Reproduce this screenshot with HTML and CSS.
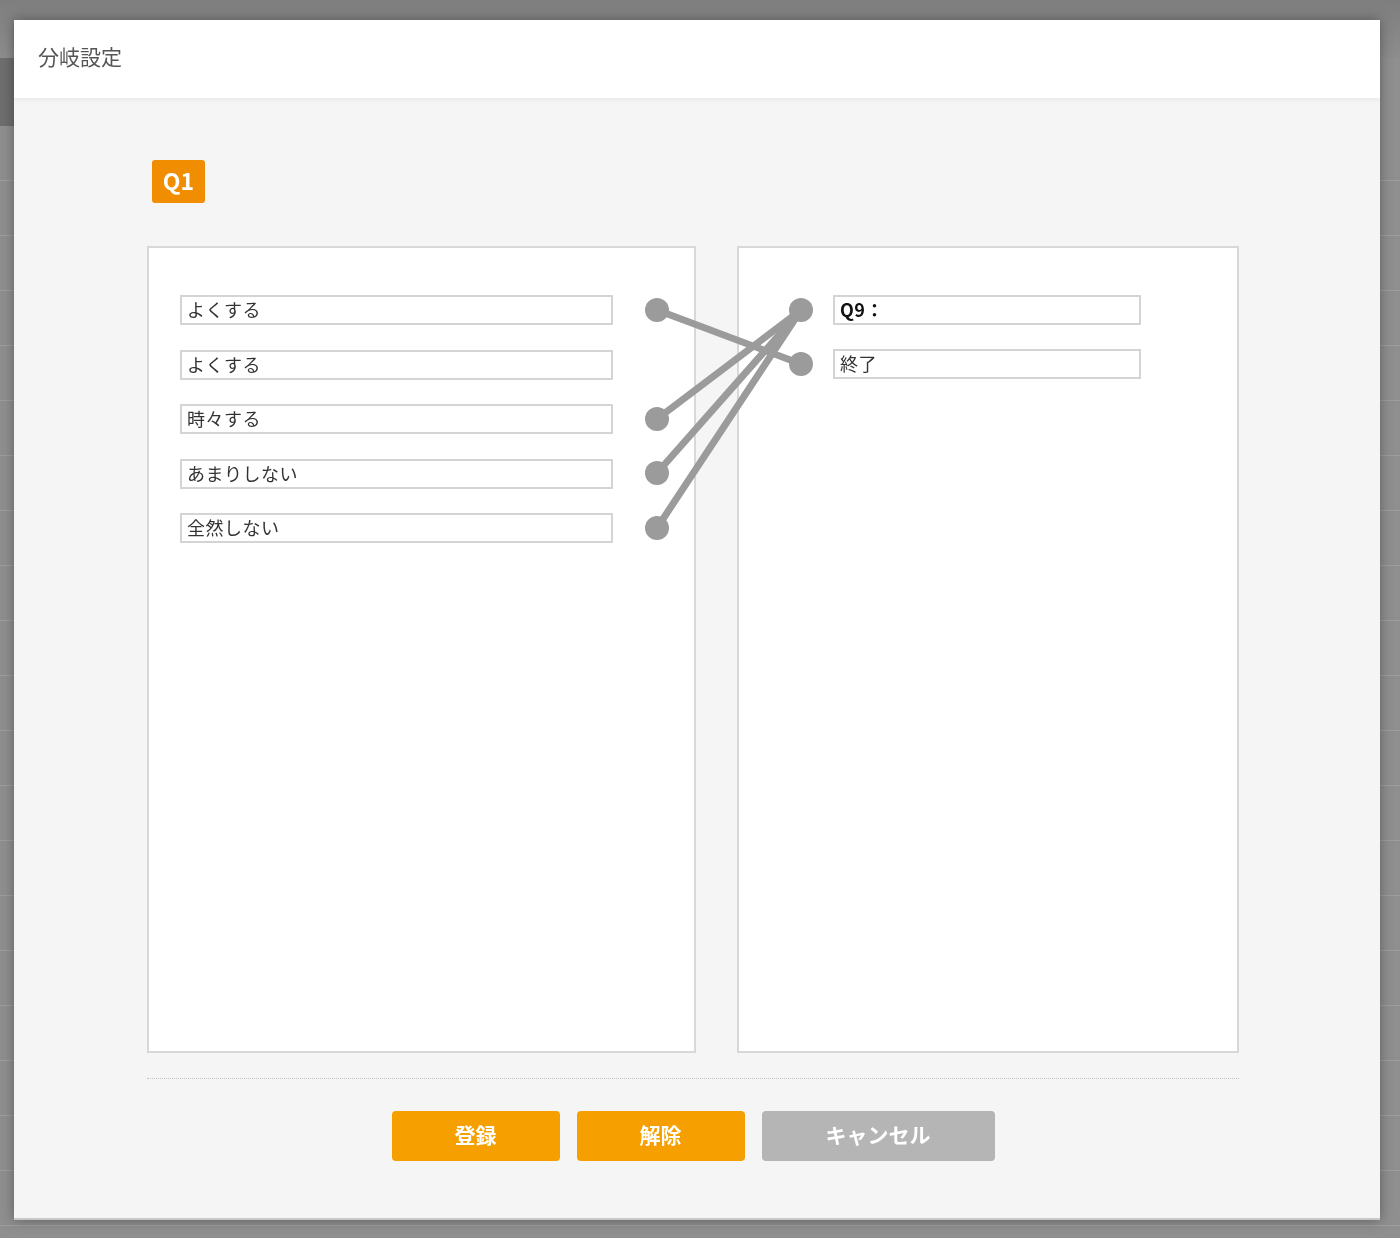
FILE: index.html
```html
<!DOCTYPE html>
<html lang="ja">
<head>
<meta charset="utf-8">
<title>分岐設定</title>
<link rel="stylesheet" href="styles.css">
</head>
<body>
<div class="bg-page">
  <div class="bg-top"></div>
  <div class="bg-tab"></div>
  <div class="bg-row"></div>
  <div class="bg-row"></div>
  <div class="bg-row"></div>
  <div class="bg-row"></div>
  <div class="bg-row"></div>
  <div class="bg-row"></div>
  <div class="bg-row"></div>
  <div class="bg-row"></div>
  <div class="bg-row"></div>
  <div class="bg-row"></div>
  <div class="bg-row"></div>
  <div class="bg-row"></div>
  <div class="bg-row"></div>
  <div class="bg-row"></div>
  <div class="bg-row"></div>
  <div class="bg-row"></div>
  <div class="bg-row"></div>
  <div class="bg-row"></div>
  <div class="bg-row"></div>
  <div class="bg-row"></div>
</div>

<div class="modal">
  <div class="modal-header">分岐設定</div>
  <div class="modal-body">
    <div class="badge">Q1</div>
    <div class="panels">
      <div class="panel panel-left">
        <div class="field">よくする</div>
        <div class="field">よくする</div>
        <div class="field">時々する</div>
        <div class="field">あまりしない</div>
        <div class="field">全然しない</div>
      </div>
      <div class="panel panel-right">
        <div class="field field-right field-strong">Q9：</div>
        <div class="field field-right">終了</div>
      </div>
      <svg class="links" width="1092" height="807" viewBox="0 0 1092 807">
        <g stroke="#9b9b9b" stroke-width="7" stroke-linecap="round">
          <line x1="510" y1="64" x2="654" y2="118"/>
          <line x1="510" y1="173" x2="654" y2="64"/>
          <line x1="510" y1="227" x2="654" y2="64"/>
          <line x1="510" y1="282" x2="654" y2="64"/>
        </g>
        <g fill="#9b9b9b">
          <circle cx="510" cy="64" r="12"/>
          <circle cx="510" cy="173" r="12"/>
          <circle cx="510" cy="227" r="12"/>
          <circle cx="510" cy="282" r="12"/>
          <circle cx="654" cy="64" r="12"/>
          <circle cx="654" cy="118" r="12"/>
        </g>
      </svg>
    </div>
    <div class="separator"></div>
    <div class="actions">
      <button class="btn btn-primary">登録</button>
      <button class="btn btn-primary">解除</button>
      <button class="btn btn-cancel">キャンセル</button>
    </div>
  </div>
</div>
</body>
</html>
```

FILE: styles.css
```css
* { box-sizing: border-box; }

html, body {
  margin: 0;
  padding: 0;
}

body {
  width: 1400px;
  height: 1238px;
  overflow: hidden;
  background: #8e8e8e;
  font-family: "Noto Sans CJK JP", "Noto Sans", sans-serif;
}

/* dimmed page behind the dialog */
.bg-page {
  width: 1400px;
  height: 1238px;
  background: #8f8f8f;
}
.bg-top {
  height: 58px;
  background: linear-gradient(#7e7e7e, #8d8d8d);
}
.bg-tab {
  height: 68px;
  width: 80px;
  background: #6e6e6e;
}
.bg-row {
  height: 55px;
  border-bottom: 1px solid #9e9e9e;
}

/* dialog */
.modal {
  position: fixed;
  left: 14px;
  top: 20px;
  width: 1366px;
  height: 1200px;
  background: #f5f5f5;
  border-bottom: 2px solid #c8c8c8;
  box-shadow: 0 0 12px rgba(0, 0, 0, 0.35);
  display: flex;
  flex-direction: column;
}

.modal-header {
  height: 78px;
  background: #ffffff;
  padding: 0 0 6px 24px;
  display: flex;
  align-items: center;
  font-size: 21px;
  color: #555555;
  box-shadow: 0 2px 4px rgba(0, 0, 0, 0.05);
  position: relative;
}

.modal-body {
  padding: 62px 0 0 133px;
  width: 1225px;
}

.badge {
  width: 53px;
  height: 43px;
  margin-left: 5px;
  background: #f08d00;
  color: #ffffff;
  border-radius: 3px;
  font-weight: 700;
  font-size: 23px;
  display: flex;
  align-items: center;
  justify-content: center;
  line-height: 1;
  padding-bottom: 2px;
}

.panels {
  position: relative;
  margin-top: 43px;
  display: flex;
  gap: 41px;
  height: 807px;
  width: 1092px;
}

.panel {
  background: #ffffff;
  border: 2px solid #d8d8d8;
  display: flex;
  flex-direction: column;
  gap: 24px;
}
.panel-left {
  width: 549px;
  padding: 47px 0 0 31px;
}
.panel-right {
  width: 502px;
  padding: 47px 0 0 94px;
}

.field {
  width: 433px;
  height: 30px;
  border: 2px solid #d4d4d4;
  background: #ffffff;
  font-size: 18px;
  color: #333333;
  padding: 0 0 2px 5px;
  display: flex;
  align-items: center;
  line-height: 1;
  letter-spacing: 0.5px;
}
.panel-left .field:nth-child(n+2) {
  margin-top: 0.5px;
}
.field-right {
  width: 308px;
}
.field-strong {
  font-weight: 700;
  color: #111111;
}

.links {
  position: absolute;
  left: 0;
  top: 0;
  pointer-events: none;
}

.separator {
  width: 1092px;
  margin-top: 25px;
  border-top: 1px dotted #c4c4c4;
}

.actions {
  width: 1092px;
  margin-top: 32px;
  display: flex;
  justify-content: center;
  gap: 17px;
}

.btn {
  height: 50px;
  border: none;
  border-radius: 4px;
  font-family: "Noto Sans CJK JP", "Noto Sans", sans-serif;
  font-size: 21px;
  font-weight: 700;
  color: #ffffff;
  padding: 0 0 4px 0;
  line-height: 1;
}
.btn-primary {
  width: 168px;
  background: #f5a000;
}
.btn-cancel {
  width: 233px;
  background: #b5b5b5;
}
```
